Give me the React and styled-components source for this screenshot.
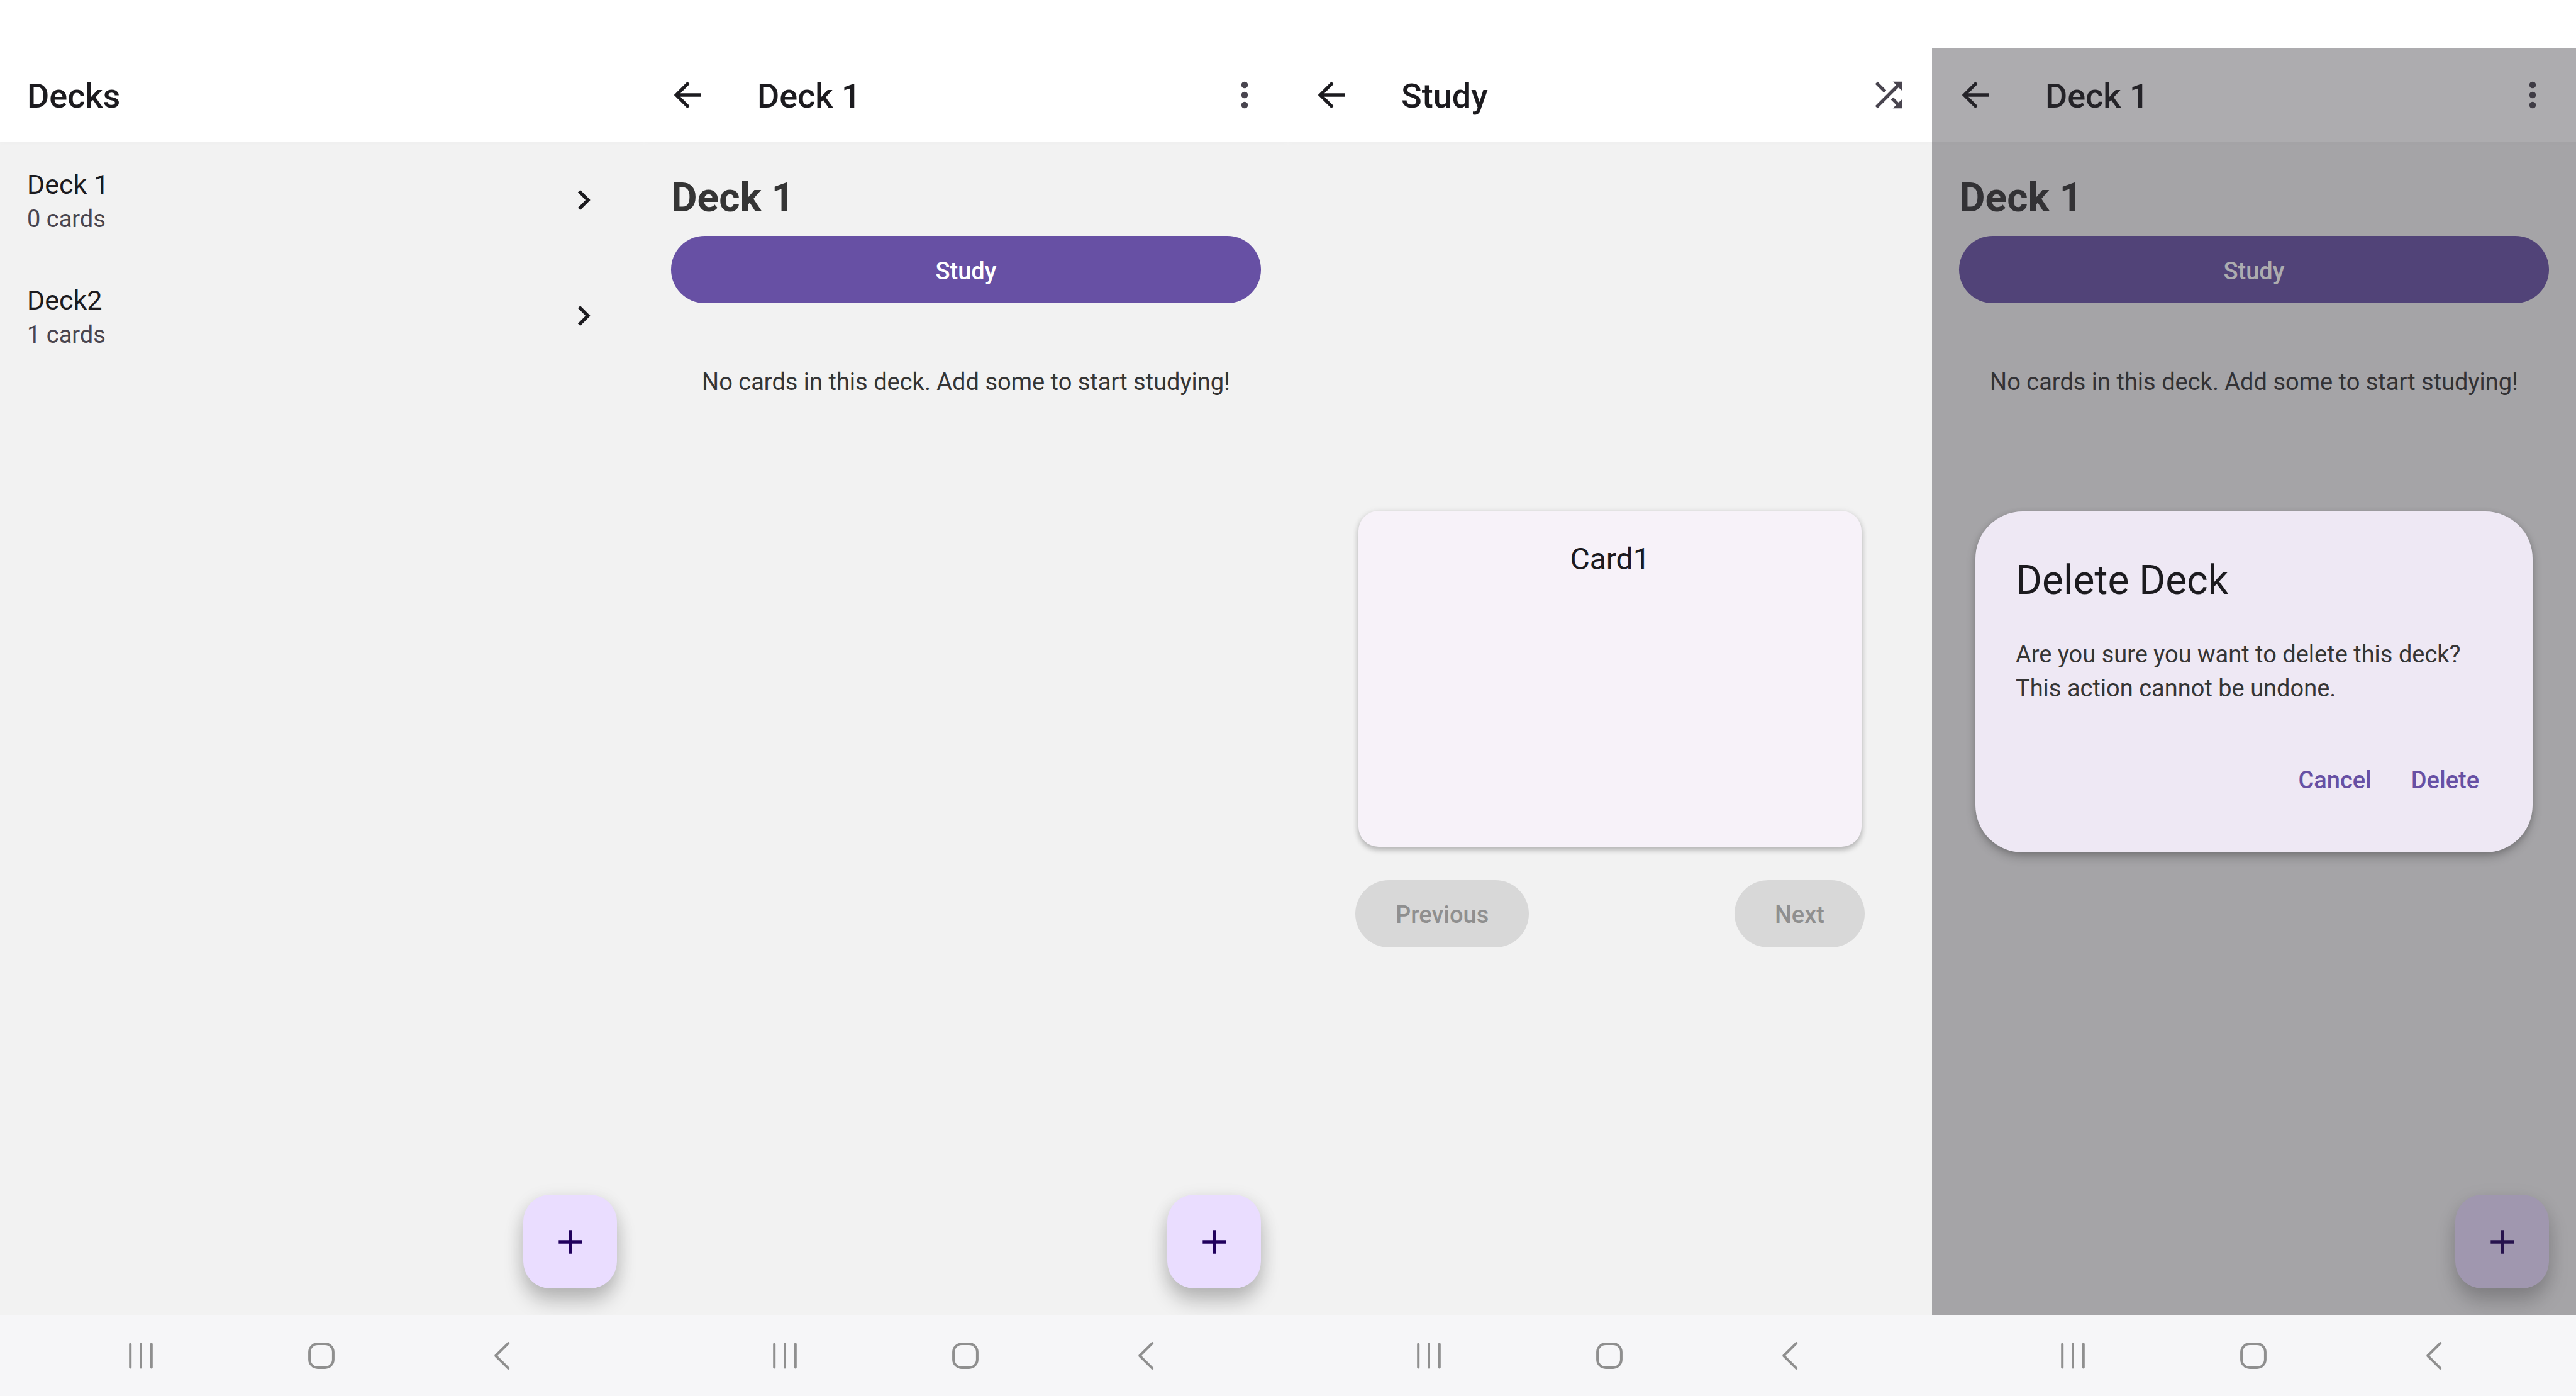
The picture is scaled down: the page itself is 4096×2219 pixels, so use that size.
import React from "react";
import styled, { createGlobalStyle } from "styled-components";

const GlobalStyle = createGlobalStyle`
  *, *::before, *::after { box-sizing: border-box; }
  body {
    margin: 0;
    background: #ffffff;
    font-family: Roboto, "Liberation Sans", sans-serif;
    color: #1c1b1f;
  }
  button { font: inherit; color: inherit; border: 0; padding: 0; background: none; cursor: pointer; }
  h1, h2, p, ul { margin: 0; padding: 0; }
  svg { display: block; }
`;

const Gallery = styled.main`
  display: grid;
  grid-template-columns: repeat(4, minmax(0, 1fr));
  min-height: 100vh;
`;

const Phone = styled.section`
  display: flex;
  flex-direction: column;
`;

const StatusBar = styled.div`
  height: 76px;
  background: #ffffff;
`;

const Stage = styled.div`
  position: relative;
  flex: 1;
  display: flex;
  flex-direction: column;
  overflow: hidden;
`;

const AppBar = styled.header`
  display: flex;
  align-items: center;
  height: 150px;
  padding: 0 37px;
  background: #ffffff;
  box-shadow: 0 4px 6px rgba(0, 0, 0, 0.01);
  z-index: 1;
`;

const BarTitle = styled.h1`
  flex: 1;
  padding-top: 4px;
  padding-left: ${(p) => (p.$inset ? 79 : 6)}px;
  font-size: 54px;
  line-height: 64px;
  font-weight: 500;
`;

const IconButton = styled.button`
  display: flex;
  color: ${(p) => (p.$muted ? "#49454f" : "#1c1b1f")};
`;

const Content = styled.div`
  flex: 1;
  display: flex;
  flex-direction: column;
  justify-content: ${(p) => (p.$centered ? "center" : "flex-start")};
  padding: ${(p) => (p.$padded ? "43px" : "0")};
  background: #f2f2f2;
`;

const DeckList = styled.ul`
  list-style: none;
`;

const DeckRow = styled.button`
  display: flex;
  align-items: center;
  justify-content: space-between;
  width: 100%;
  height: 184px;
  padding: 0 64px 0 43px;
  text-align: left;
`;

const DeckText = styled.span`
  display: flex;
  flex-direction: column;
  padding-top: 2px;
`;

const DeckName = styled.span`
  font-size: 43px;
  line-height: 58px;
`;

const DeckCount = styled.span`
  font-size: 38px;
  line-height: 52px;
  color: #49454f;
`;

const Heading = styled.h2`
  margin-bottom: 14px;
  font-size: 64px;
  line-height: 92px;
  font-weight: 700;
  color: #353535;
`;

const PillButton = styled.button`
  height: 107px;
  padding: 5px 64px 0;
  border-radius: 54px;
  font-size: 38px;
  line-height: 53px;
  font-weight: 500;
  color: #ffffff;
  background: #6750a4;

  &:disabled {
    color: #8f8f8f;
    background: #d8d8d8;
    cursor: default;
  }
`;

const EmptyNote = styled.p`
  margin-top: 99px;
  font-size: 38px;
  line-height: 53px;
  text-align: center;
  color: #353535;
`;

const FlashCard = styled.article`
  align-self: center;
  width: 100%;
  max-width: 800px;
  height: 534px;
  padding: 43px;
  border-radius: 32px;
  background: #f7f2f9;
  box-shadow: 0 5px 10px rgba(0, 0, 0, 0.24), 0 1px 12px rgba(0, 0, 0, 0.08);
  font-size: 48px;
  line-height: 68px;
  text-align: center;
`;

const Pager = styled.div`
  display: flex;
  justify-content: space-between;
  padding: 53px 107px 0;
`;

const Fab = styled.button`
  position: absolute;
  right: 43px;
  bottom: 43px;
  display: grid;
  place-items: center;
  width: 149px;
  height: 149px;
  border-radius: 43px;
  color: #21005d;
  background: #eaddff;
  box-shadow: 0 22px 32px rgba(0, 0, 0, 0.2), 0 6px 28px rgba(0, 0, 0, 0.1);
`;

const Scrim = styled.div`
  position: absolute;
  inset: 0;
  z-index: 2;
  display: flex;
  align-items: center;
  padding: 0 69px;
  background: rgba(50, 47, 55, 0.4);
`;

const Dialog = styled.div`
  width: 100%;
  padding: 67px 64px 63px;
  border-radius: 75px;
  background: #eee8f4;
  box-shadow: 0 8px 16px rgba(0, 0, 0, 0.2), 0 2px 10px rgba(0, 0, 0, 0.14);
`;

const DialogTitle = styled.h2`
  font-size: 64px;
  line-height: 85px;
  font-weight: 400;
`;

const DialogText = styled.p`
  margin-top: 48px;
  font-size: 38px;
  line-height: 54px;
  color: #353535;
`;

const DialogActions = styled.div`
  display: flex;
  justify-content: flex-end;
  gap: 21px;
  margin-top: 64px;
`;

const TextButton = styled.button`
  height: 107px;
  padding: 5px 21px 0;
  font-size: 38px;
  line-height: 53px;
  font-weight: 500;
  color: #6750a4;
`;

const SystemNav = styled.nav`
  display: flex;
  justify-content: center;
  height: 128px;
  padding-right: 3px;
  background: #f6f6f8;
`;

const NavKey = styled.button`
  display: grid;
  place-items: center;
  width: 287px;
  color: #8f8f8f;
`;

const ICONS = {
  back: "M20 11H7.83l5.59-5.59L12 4l-8 8 8 8 1.41-1.41L7.83 13H20v-2z",
  chevron: "M8.59 16.58L13.17 12 8.59 7.41 10 6l6 6-6 6z",
  more: "M12 16a2 2 0 1 1 0 4 2 2 0 0 1 0-4m0-6a2 2 0 1 1 0 4 2 2 0 0 1 0-4m0-6a2 2 0 1 1 0 4 2 2 0 0 1 0-4z",
  shuffle:
    "M10.59 9.17L5.41 4 4 5.41l5.17 5.17 1.42-1.41zM14.5 4l2.04 2.04L4 18.59 5.41 20 17.96 7.46 20 9.5V4h-5.5zm.33 9.41l-1.41 1.41 3.13 3.13L14.5 20H20v-5.5l-2.04 2.04-3.13-3.13z",
  plus: "M19 13h-6v6h-2v-6H5v-2h6V5h2v6h6v2z",
};

function Icon({ name }) {
  return (
    <svg width="64" height="64" viewBox="0 0 24 24" fill="currentColor" aria-hidden="true">
      <path d={ICONS[name]} />
    </svg>
  );
}

function NavIcon({ children }) {
  return (
    <svg
      width="48"
      height="48"
      viewBox="0 0 48 48"
      fill="none"
      stroke="currentColor"
      strokeWidth="4"
      strokeLinecap="round"
      strokeLinejoin="round"
      aria-hidden="true"
    >
      {children}
    </svg>
  );
}

function Screen({ title, back, action, actionLabel, children, overlay, ...content }) {
  return (
    <Phone>
      <StatusBar />
      <Stage>
        <AppBar>
          {back && (
            <IconButton type="button" aria-label="Back">
              <Icon name="back" />
            </IconButton>
          )}
          <BarTitle $inset={back}>{title}</BarTitle>
          {action && (
            <IconButton type="button" $muted aria-label={actionLabel}>
              <Icon name={action} />
            </IconButton>
          )}
        </AppBar>
        <Content {...content}>{children}</Content>
        {overlay}
      </Stage>
      <SystemNav aria-label="System">
        <NavKey type="button" aria-label="Recent apps">
          <NavIcon>
            <path d="M7.2 5.6v36.800M24 5.600v36.800M40.800 5.600v36.800" />
          </NavIcon>
        </NavKey>
        <NavKey type="button" aria-label="Home">
          <NavIcon>
            <rect x="5.1" y="5.1" width="37.8" height="37.8" rx="13" />
          </NavIcon>
        </NavKey>
        <NavKey type="button" aria-label="Go back">
          <NavIcon>
            <path d="M34.2 4.2L14.200 24l20 19.800" />
          </NavIcon>
        </NavKey>
      </SystemNav>
    </Phone>
  );
}

function AddButton({ label }) {
  return (
    <Fab type="button" aria-label={label}>
      <Icon name="plus" />
    </Fab>
  );
}

function DeckScreen({ overlay }) {
  return (
    <Screen title="Deck 1" back action="more" actionLabel="More options" overlay={overlay} $padded>
      <Heading>Deck 1</Heading>
      <PillButton type="button">Study</PillButton>
      <EmptyNote>No cards in this deck. Add some to start studying!</EmptyNote>
      <AddButton label="Add card" />
    </Screen>
  );
}

const decks = [
  { name: "Deck 1", count: 0 },
  { name: "Deck2", count: 1 },
];

export default function App() {
  return (
    <>
      <GlobalStyle />
      <Gallery>
        <Screen title="Decks">
          <DeckList>
            {decks.map((deck) => (
              <li key={deck.name}>
                <DeckRow type="button">
                  <DeckText>
                    <DeckName>{deck.name}</DeckName>
                    <DeckCount>{deck.count} cards</DeckCount>
                  </DeckText>
                  <Icon name="chevron" />
                </DeckRow>
              </li>
            ))}
          </DeckList>
          <AddButton label="Add deck" />
        </Screen>

        <DeckScreen />

        <Screen title="Study" back action="shuffle" actionLabel="Shuffle" $centered>
          <FlashCard>Card1</FlashCard>
          <Pager>
            <PillButton type="button" disabled>Previous</PillButton>
            <PillButton type="button" disabled>Next</PillButton>
          </Pager>
        </Screen>

        <DeckScreen
          overlay={
            <Scrim>
              <Dialog role="dialog" aria-modal="true" aria-labelledby="delete-title">
                <DialogTitle id="delete-title">Delete Deck</DialogTitle>
                <DialogText>
                  Are you sure you want to delete this deck? This action cannot be undone.
                </DialogText>
                <DialogActions>
                  <TextButton type="button">Cancel</TextButton>
                  <TextButton type="button">Delete</TextButton>
                </DialogActions>
              </Dialog>
            </Scrim>
          }
        />
      </Gallery>
    </>
  );
}
